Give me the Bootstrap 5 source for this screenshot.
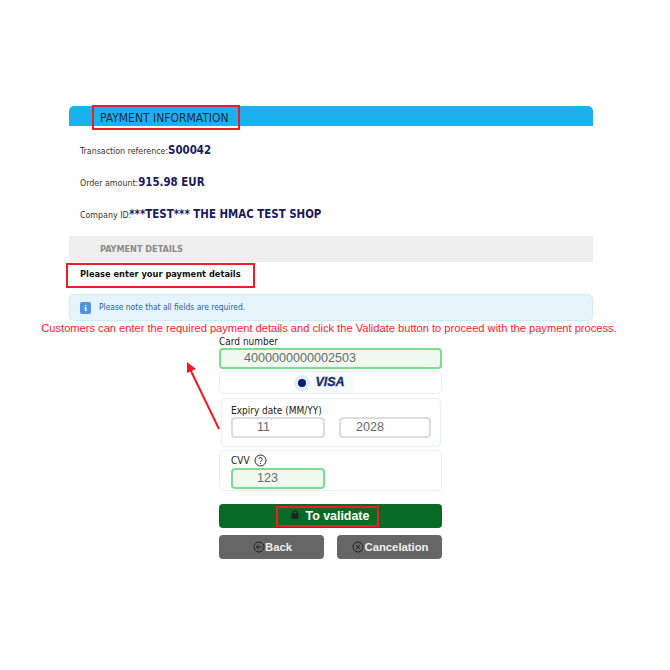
<!DOCTYPE html>
<html lang="en"><head><meta charset="utf-8"><title>Payment</title>
<link href="https://cdn.jsdelivr.net/npm/bootstrap@5.3.0/dist/css/bootstrap.min.css" rel="stylesheet">
<style>
html,body{height:670px;overflow:hidden;background:#fff}
body{font-family:"DejaVu Sans Condensed","DejaVu Sans",sans-serif;color:#222}
.pay-page{position:relative;width:670px;height:670px;padding:106px 77px 0 69px}
.pay-head{height:20px;background:#1db0ef;border-radius:5px 5px 0 0;padding-left:31px;font-size:12px;line-height:24px;color:#1c2b44}
.ref-row{height:32px;padding-left:11px;font-size:8.8px;color:#333;display:flex;align-items:baseline;white-space:nowrap}
.ref-row b{font-size:11.4px;color:#1a1a5c;font-weight:700}
.ref-row .co-val{margin-left:-2px}
.ref-list{padding-top:16px}
.sub-head{height:26px;margin-top:-2px;background:#eee;padding-left:31px;font-size:9.05px;font-weight:700;line-height:26px;color:#8a8a8a}
.enter-line{height:32px;padding-left:11px;font-size:9.2px;font-weight:700;line-height:23px;color:#111}
.note-box{height:27px;background:#e5f3fb;border:1px solid #d3e9f7;border-radius:5px;padding-left:10px;font-size:8.4px;color:#2c5fa8;display:flex;align-items:center;gap:8px}
.note-icon{width:11px;height:12px;background:#4f93e0;border-radius:2px;color:#fff;font:700 9px/12px "Liberation Serif",serif;text-align:center}
.caption{margin:0 -26px 0 -30px;height:14px;font:11.12px/13px "Liberation Sans",sans-serif;color:#f5222d;text-align:center;padding-top:1px;white-space:nowrap}
.form-col{width:223px;margin-left:150px}
.fld-label{font-size:10px;line-height:13px;color:#222}
.fld{font:12.6px/17px "Liberation Sans",sans-serif;color:#6a6a6a;border:2px solid #ddd;border-radius:4px;background:#fff;height:21px}
.fld-ok{background:#f0f9f0;border-color:#7bdc93}
.fld-num{padding-left:23px}
.brand-box{height:23px;margin-top:2px;border:1px solid #e8eef5;border-radius:5px;display:flex;justify-content:center;align-items:center;padding-right:14px}
.radio-dot{width:16px;height:16px;border-radius:50%;background:#e2ecf8;display:flex;align-items:center;justify-content:center}
.radio-dot i{display:block;width:8px;height:8px;border-radius:50%;background:#0a1f70}
.visa-mark{font:italic 700 12.5px/21px "Liberation Sans",sans-serif;color:#1a2a6c;background:#f6fafd;padding:0 8px 0 5px;-webkit-text-stroke:.3px #1a2a6c}
.exp-box{margin:4px 1px 0 2px;height:49px;border:1px solid #e8eef5;border-radius:5px;padding:5px 9px}
.exp-row{display:flex;justify-content:space-between}
.exp-a{width:94px;padding-left:24px}
.exp-b{width:92px;padding-left:15px}
.cvv-box{margin:3px 0 0 0;height:41px;border:1px solid #e8eef5;border-radius:5px;padding:3px 11px}
.cvv-label{font-size:10px;line-height:14px;display:flex;align-items:flex-start;gap:4px}
.cvv-in{width:94px;padding-left:24px}
.pay-btn{display:flex;align-items:center;justify-content:center;border:0;border-radius:4px;color:#eee;font:700 11.3px/16px "Liberation Sans",sans-serif;padding:0}
.go-btn{height:24px;width:223px;margin-top:13px;background:#086a25;color:#fff;font-size:12.4px;padding-right:1px}
.go-btn svg{margin-top:-3px}
.two-btn{display:flex;justify-content:space-between;margin-top:7px}
.grey-btn{height:24px;background:#666}
.back-btn,.cancel-btn{width:105px;padding-left:2px}
.red-frame{position:absolute;border:2px solid #ee1c25;pointer-events:none}
.frame-head{left:92px;top:105px;width:148px;height:25px}
.frame-enter{left:66px;top:263px;width:189px;height:25px}
.frame-go{left:276px;top:506px;width:103px;height:21px}
.arrow-svg{position:absolute;left:180px;top:355px}
</style></head>
<body>
<div class="pay-page">
  <div class="pay-head">PAYMENT INFORMATION</div>
  <div class="ref-list">
    <div class="ref-row">Transaction reference:<b>S00042</b></div>
    <div class="ref-row">Order amount:<b>915.98 EUR</b></div>
    <div class="ref-row">Company ID:<b class="co-val">***TEST*** THE HMAC TEST SHOP</b></div>
  </div>
  <div class="sub-head">PAYMENT DETAILS</div>
  <div class="enter-line">Please enter your payment details</div>
  <div class="note-box"><span class="note-icon">i</span><span>Please note that all fields are required.</span></div>
  <div class="caption">Customers can enter the required payment details and click the Validate button to proceed with the payment process.</div>
  <div class="form-col">
    <div class="fld-label">Card number</div>
    <div class="fld fld-ok fld-num">4000000000002503</div>
    <div class="brand-box"><span class="radio-dot"><i></i></span><span class="visa-mark">VISA</span></div>
    <div class="exp-box">
      <div class="fld-label">Expiry date (MM/YY)</div>
      <div class="exp-row"><div class="fld exp-a">11</div><div class="fld exp-b">2028</div></div>
    </div>
    <div class="cvv-box">
      <div class="cvv-label">CVV
        <svg width="13" height="13" viewBox="0 0 13 13" fill="none" stroke="#222" stroke-width="1"><circle cx="6.5" cy="6.5" r="5.5"/><path d="M4.8 5.2a1.7 1.7 0 1 1 2.6 1.5c-.6.3-.9.6-.9 1.2"/><path d="M6.5 9v1"/></svg>
      </div>
      <div class="fld fld-ok cvv-in">123</div>
    </div>
    <button type="button" class="btn pay-btn go-btn"><svg width="8" height="9" viewBox="0 0 8 9" fill="#222"><path d="M2 4V2.6a2 2 0 0 1 4 0V4" fill="none" stroke="#222" stroke-width="1.2"/><rect x="0.5" y="3.6" width="7" height="5.2" rx=".6"/></svg>&nbsp;&nbsp;To validate</button>
    <div class="two-btn">
      <button type="button" class="btn pay-btn grey-btn back-btn"><svg width="12" height="12" viewBox="0 0 12 12" fill="none" stroke="#222" stroke-width="1"><circle cx="6" cy="6" r="5"/><path d="M9 6H3.5M5.5 4 3.3 6l2.2 2"/></svg>Back</button>
      <button type="button" class="btn pay-btn grey-btn cancel-btn"><svg width="12" height="12" viewBox="0 0 12 12" fill="none" stroke="#222" stroke-width="1"><circle cx="6" cy="6" r="5"/><path d="M4 4l4 4M8 4l-4 4"/></svg>Cancelation</button>
    </div>
  </div>
  <div class="red-frame frame-head"></div>
  <div class="red-frame frame-enter"></div>
  <div class="red-frame frame-go"></div>
  <svg class="arrow-svg" width="45" height="80" viewBox="0 0 45 80"><path d="M39 74 10 14" stroke="#ee1c25" stroke-width="2" fill="none"/><path d="M7 7l9 7-9 4z" fill="#ee1c25"/></svg>
</div>
<script src="https://cdn.jsdelivr.net/npm/bootstrap@5.3.0/dist/js/bootstrap.bundle.min.js"></script>
</body></html>
